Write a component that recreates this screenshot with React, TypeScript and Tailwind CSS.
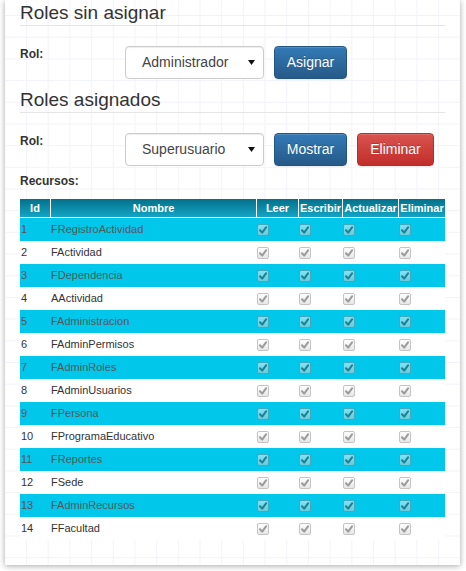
import React from 'react';

const recursos = [
  'FRegistroActividad',
  'FActividad',
  'FDependencia',
  'AActividad',
  'FAdministracion',
  'FAdminPermisos',
  'FAdminRoles',
  'FAdminUsuarios',
  'FPersona',
  'FProgramaEducativo',
  'FReportes',
  'FSede',
  'FAdminRecursos',
  'FFacultad',
];

const Check = () => (
  <span className="flex h-[12px] w-[12px] items-center justify-center rounded-[2px] border border-[#8a8a8a] bg-[linear-gradient(to_bottom,#ffffff,#cfcfcf)] opacity-50">
    <svg width="10" height="10" viewBox="0 0 10 10">
      <path d="M2 5.2 L4.2 7.6 L8.2 2.2" fill="none" stroke="#3a3a3a" strokeWidth="2" strokeLinecap="round" strokeLinejoin="round" />
    </svg>
  </span>
);

const Select = ({value}: {value: string}) => (
  <div className="flex h-[33px] w-[139px] items-center justify-between rounded-[4px] border border-[#cccccc] bg-white pl-[16px] pr-[8px] text-[14px] text-[#444] shadow-[inset_0_1px_1px_rgba(0,0,0,0.075)]">
    <span>{value}</span>
    <svg width="7" height="5" viewBox="0 0 7 5">
      <path d="M0 0 L7 0 L3.5 5 Z" fill="#111" />
    </svg>
  </div>
);

const Btn = ({label, red, w}: {label: string; red?: boolean; w: string}) => (
  <button
    className={
      'ml-[10px] flex h-[33px] items-center justify-center rounded-[4px] border text-[14px] text-white [text-shadow:0_-1px_0_rgba(0,0,0,0.2)] shadow-[inset_0_1px_0_rgba(255,255,255,0.15),0_1px_1px_rgba(0,0,0,0.075)] ' +
      (red
        ? 'border-[#b92c28] bg-[linear-gradient(to_bottom,#d9534f,#c12e2a)] '
        : 'border-[#245580] bg-[linear-gradient(to_bottom,#337ab7,#265a88)] ') +
      w
    }
  >
    {label}
  </button>
);

const Heading = ({text, top}: {text: string; top: string}) => (
  <>
    <div className={'h-[21px] text-[19px] leading-[21px] text-[#333] ' + top}>{text}</div>
    <div className="mt-[2px] h-px bg-[#e5e5e5]" />
  </>
);

export default function App() {
  return (
    <div className="min-h-[571px] bg-white pl-[5px] font-['Liberation_Sans',Arial,sans-serif]">
      <div className="h-[565px] w-[455px] bg-white bg-[linear-gradient(to_right,#f2f2fa_1px,transparent_1px),linear-gradient(to_bottom,#f2f2fa_1px,transparent_1px)] bg-size-[21.7px_21.7px] bg-position-[21px_15px] px-[15px] pt-[2px] shadow-[0_1px_6px_rgba(0,0,0,0.35)]">
        <Heading text="Roles sin asignar" top="" />

        <div className="mt-[20px] flex items-start">
          <div className="w-[105px] pt-[1px] text-[12px] font-bold leading-[14px] text-[#333]">Rol:</div>
          <Select value="Administrador" />
          <Btn label="Asignar" w="w-[73px]" />
        </div>

        <Heading text="Roles asignados" top="mt-[10px]" />

        <div className="mt-[20px] flex items-start">
          <div className="w-[105px] pt-[1px] text-[12px] font-bold leading-[14px] text-[#333]">Rol:</div>
          <Select value="Superusuario" />
          <Btn label="Mostrar" w="w-[73px]" />
          <Btn label="Eliminar" red w="w-[77px]" />
        </div>

        <div className="mt-[8px] h-[14px] text-[12px] font-bold leading-[14px] text-[#333]">Recursos:</div>

        <div className="mt-[11px] grid w-[425px] grid-cols-[30px_206px_42px_44px_56px_47px] text-[11px]">
          {['Id', 'Nombre', 'Leer', 'Escribir', 'Actualizar', 'Eliminar'].map((h, i) => (
            <div
              key={h}
              className={
                'flex h-[19px] items-center justify-center border-b border-white bg-[linear-gradient(to_bottom,#04708b,#13a5c5)] font-bold text-white ' +
                (i > 0 ? 'border-l' : '')
              }
            >
              {h}
            </div>
          ))}
          {recursos.map((r, i) => {
            const odd = i % 2 === 0;
            const row = odd ? 'bg-[#01c7ea] text-[#555]' : 'bg-white text-[#333]';
            return (
              <React.Fragment key={r}>
                <div className={'flex h-[23px] items-center pl-[1px] ' + row}>{i + 1}</div>
                <div className={'flex h-[23px] items-center pl-[1px] ' + row}>{r}</div>
                {[0, 1, 2, 3].map((c) => (
                  <div key={c} className={'flex h-[23px] items-center pl-[1px] ' + row}>
                    <Check />
                  </div>
                ))}
              </React.Fragment>
            );
          })}
        </div>
      </div>
    </div>
  );
}
